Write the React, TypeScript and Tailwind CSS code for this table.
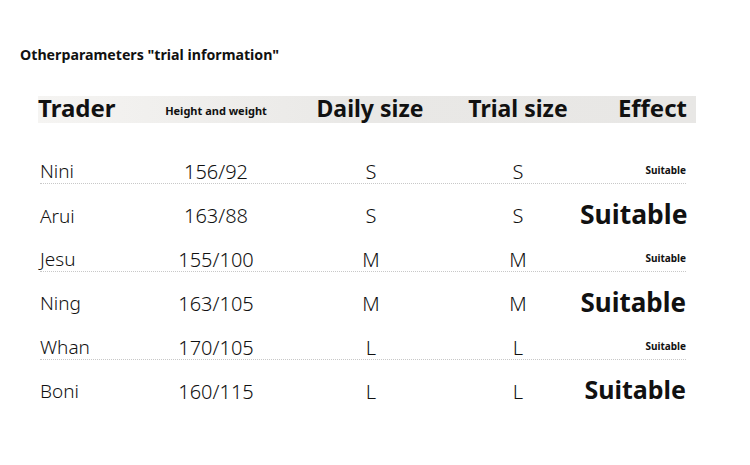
import React from 'react'

const rows = [
  { name: 'Nini', hw: '156/92', daily: 'S', trial: 'S', big: '', line: true },
  { name: 'Arui', hw: '163/88', daily: 'S', trial: 'S', big: 'text-[26.5px]', line: false },
  { name: 'Jesu', hw: '155/100', daily: 'M', trial: 'M', big: '', line: true },
  { name: 'Ning', hw: '163/105', daily: 'M', trial: 'M', big: 'text-[26px]', line: false },
  { name: 'Whan', hw: '170/105', daily: 'L', trial: 'L', big: '', line: true },
  { name: 'Boni', hw: '160/115', daily: 'L', trial: 'L', big: 'text-[25px]', line: false },
]

const App = () => {
  return (
    <div className="w-[750px] h-[465px] bg-white text-[#111] font-['Noto_Sans',sans-serif] overflow-hidden">
      <div className="pt-[44px] pl-[20px]">
        <h1 className="text-[14.2px] font-bold leading-[22px]">Otherparameters "trial information"</h1>
      </div>

      <div className="mt-[30px] ml-[38px] w-[658px] h-[27px] pr-[9px] pb-[5px] grid grid-cols-[114px_128px_176px_124px_1fr] items-center bg-gradient-to-r from-[#f5f4f2] via-[#e9e8e6] to-[#e8e7e5]">
        <div className="text-[24px] font-bold leading-none">Trader</div>
        <div className="text-[11px] font-bold text-center leading-none pt-[4px]">Height and weight</div>
        <div className="text-[23px] font-bold text-center leading-none pl-[4px]">Daily size</div>
        <div className="text-[23px] font-bold text-center leading-none">Trial size</div>
        <div className="text-[24px] font-bold text-right leading-none">Effect</div>
      </div>

      <div className="mt-[25px] ml-[40px] w-[646px]">
        {rows.map((r) => (
          <div key={r.name} className="h-[44px] flex flex-col justify-center">
            <div
              className={
                r.line
                  ? 'h-[27px] pb-[5px] grid grid-cols-[112px_128px_176px_124px_1fr] items-center border-b border-dotted border-[#c8c8c8]'
                  : 'h-[27px] pb-[5px] grid grid-cols-[112px_128px_176px_124px_1fr] items-center'
              }
            >
              <div className="text-[19px] font-light">{r.name}</div>
              <div className="text-[20px] font-light text-center">{r.hw}</div>
              <div className="text-[20px] font-light text-center pl-[6px]">{r.daily}</div>
              <div className="text-[20px] font-light text-center">{r.trial}</div>
              <div className={r.big ? r.big + ' font-bold text-right leading-none pb-[4px]' : 'text-[10px] font-bold text-right leading-none pb-[4px]'}>
                Suitable
              </div>
            </div>
          </div>
        ))}
      </div>
    </div>
  )
}

export default App
